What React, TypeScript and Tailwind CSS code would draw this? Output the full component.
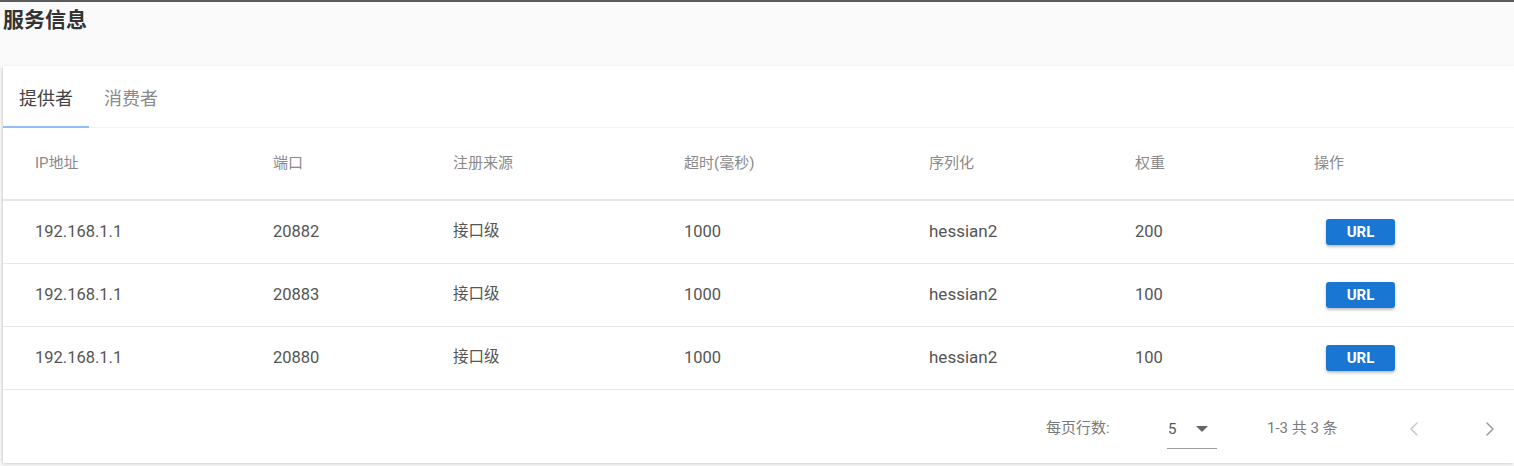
import { ChevronLeft, ChevronRight } from 'lucide-react';

const columns = ['IP地址', '端口', '注册来源', '超时(毫秒)', '序列化', '权重', '操作'];

const rows = [
  { ip: '192.168.1.1', port: '20882', source: '接口级', timeout: '1000', serial: 'hessian2', weight: '200' },
  { ip: '192.168.1.1', port: '20883', source: '接口级', timeout: '1000', serial: 'hessian2', weight: '100' },
  { ip: '192.168.1.1', port: '20880', source: '接口级', timeout: '1000', serial: 'hessian2', weight: '100' },
];

const gridCols = 'grid grid-cols-[238px_180px_231px_245px_206px_179px_1fr] items-center pl-[32px]';

export default function App() {
  return (
    <div
      className="w-[1514px] h-[466px] bg-[#fafafa] border-t-2 border-[#5c5c5c] overflow-hidden"
      style={{ fontFamily: 'Roboto, "Noto Sans CJK SC", sans-serif' }}
    >
      {/* 标题 */}
      <div className="h-[64px] pl-[3px] pt-[6px]">
        <h2 className="text-[21px] font-bold text-[#333] leading-[24px]">服务信息</h2>
      </div>

      {/* 卡片 */}
      <div className="ml-[3px] bg-white shadow-[-1px_1px_3px_rgba(0,0,0,0.18)]">
        {/* 标签页 */}
        <div className="flex h-[62px] border-b border-[#f2f2f2]">
          <div className="relative w-[86px] flex items-center pl-[16px] pt-[3px] text-[18px] text-[#444]">
            提供者
            <span className="absolute left-0 right-0 bottom-[-1px] h-[2px] bg-[#90bdf5]" />
          </div>
          <div className="flex items-center pl-[15px] pt-[3px] text-[18px] text-[#8a8a8a]">消费者</div>
        </div>

        {/* 表头 */}
        <div className={`${gridCols} h-[73px] border-b-2 border-[#e6e6e6] text-[15px] text-[#8a8a8a]`}>
          {columns.map((c) => (
            <div key={c}>{c}</div>
          ))}
        </div>

        {/* 数据行 */}
        {rows.map((r) => (
          <div key={r.port} className={`${gridCols} h-[63px] border-b border-[#e8e8e8] text-[16.5px] text-[#555]`}>
            <div>{r.ip}</div>
            <div>{r.port}</div>
            <div className="text-[15.5px]">{r.source}</div>
            <div>{r.timeout}</div>
            <div className="text-[17px]">{r.serial}</div>
            <div>{r.weight}</div>
            <div>
              <button className="ml-[12px] w-[69px] h-[26px] rounded-[3px] bg-[#1976d2] text-white text-[15px] font-bold shadow-[0_2px_3px_rgba(0,0,0,0.25)]">
                URL
              </button>
            </div>
          </div>
        ))}

        {/* 分页 */}
        <div className="flex items-center h-[73px] pt-[4px] text-[15px] text-[#7a7a7a]">
          <span className="ml-[1043px] w-[121px]">每页行数:</span>
          <div className="relative flex items-center w-[50px] h-[30px] pl-[1px] text-[#555] border-b border-[#9e9e9e] mt-[10px] pb-[8px]">
            <span className="text-[15px]">5</span>
            <svg className="absolute left-[29px] top-[7px]" width="12" height="6" viewBox="0 0 12 6">
              <path d="M0 0 L12 0 L6 6 Z" fill="#666" />
            </svg>
          </div>
          <span className="ml-[50px]">1-3 共 3 条</span>
          <ChevronLeft className="ml-[64px] w-[24px] h-[24px] text-[#c8c8c8]" strokeWidth={1.5} />
          <ChevronRight className="ml-[52px] w-[24px] h-[24px] text-[#9a9a9a]" strokeWidth={1.5} />
        </div>
      </div>
    </div>
  );
}
